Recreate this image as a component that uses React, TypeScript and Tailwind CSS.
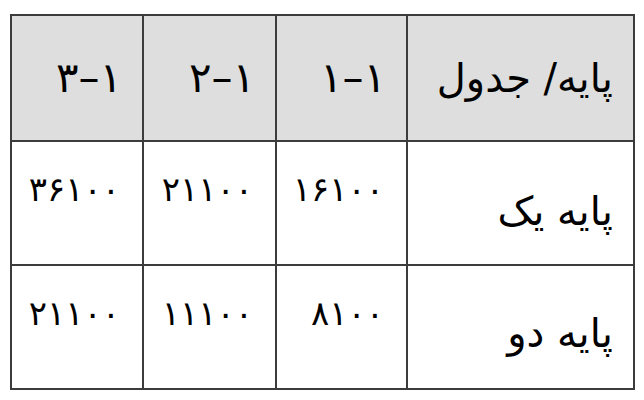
import React from 'react';

const heads = ['پایه/ جدول', '۱–۱', '۱–۲', '۱–۳'];

const rows = [
    { label: 'پایه یک', values: ['۱۶۱۰۰', '۲۱۱۰۰', '۳۶۱۰۰'] },
    { label: 'پایه دو', values: ['۸۱۰۰', '۱۱۱۰۰', '۲۱۱۰۰'] },
];

export default function App() {
    return (
        <div className="w-[644px] h-[400px] bg-white pt-[14px] pl-[10px]" style={{ fontFamily: '"DejaVu Sans", sans-serif' }}>
            <table dir="rtl" className="border-collapse w-[623px] table-fixed text-black">
                <colgroup>
                    <col className="w-[227px]" />
                    <col className="w-[131px]" />
                    <col className="w-[133px]" />
                    <col className="w-[132px]" />
                </colgroup>
                <thead>
                    <tr className="h-[126px] bg-[#dedede]">
                        {heads.map((h, i) => (
                            <th
                                key={i}
                                className={`border-2 border-[#3c3c3c] text-right font-normal align-middle pr-[20px] leading-none ${i === 0 ? 'text-[40px]' : 'text-[42px]'}`}
                            >
                                {h}
                            </th>
                        ))}
                    </tr>
                </thead>
                <tbody>
                    {rows.map((r, ri) => (
                        <tr key={r.label} className="h-[124px]">
                            <td className={`border-2 border-[#3c3c3c] text-right align-top pr-[20px] text-[40px] leading-none ${ri === 0 ? 'pt-[49px]' : 'pt-[47px]'}`}>
                                {r.label}
                            </td>
                            {r.values.map((v, i) => (
                                <td
                                    key={i}
                                    className="border-2 border-[#3c3c3c] text-right align-top pr-[22px] pt-[30px] text-[34px] leading-none"
                                >
                                    {v}
                                </td>
                            ))}
                        </tr>
                    ))}
                </tbody>
            </table>
        </div>
    );
}
